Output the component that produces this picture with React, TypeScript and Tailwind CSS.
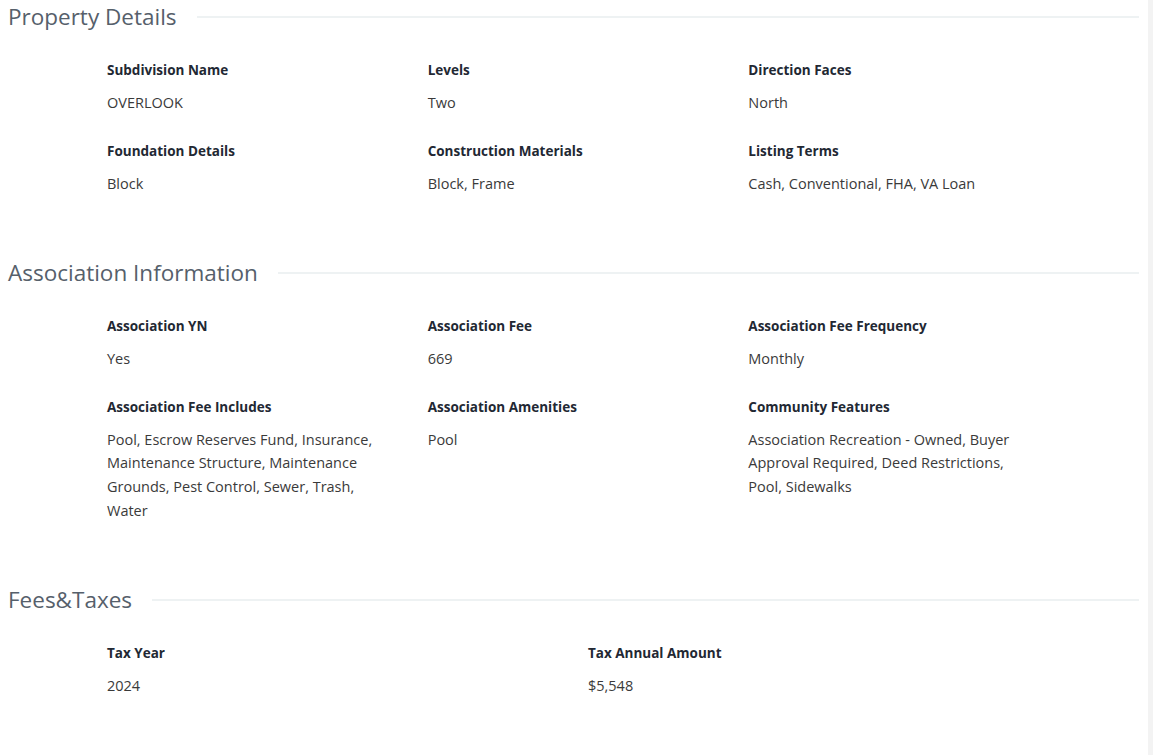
import React from "react";

type Item = { label: string; value: string };

const sections: { title: string; cols: number; items: Item[] }[] = [
  {
    title: "Property Details",
    cols: 3,
    items: [
      { label: "Subdivision Name", value: "OVERLOOK" },
      { label: "Levels", value: "Two" },
      { label: "Direction Faces", value: "North" },
      { label: "Foundation Details", value: "Block" },
      { label: "Construction Materials", value: "Block, Frame" },
      { label: "Listing Terms", value: "Cash, Conventional, FHA, VA Loan" },
    ],
  },
  {
    title: "Association Information",
    cols: 3,
    items: [
      { label: "Association YN", value: "Yes" },
      { label: "Association Fee", value: "669" },
      { label: "Association Fee Frequency", value: "Monthly" },
      {
        label: "Association Fee Includes",
        value:
          "Pool, Escrow Reserves Fund, Insurance, Maintenance Structure, Maintenance Grounds, Pest Control, Sewer, Trash, Water",
      },
      { label: "Association Amenities", value: "Pool" },
      {
        label: "Community Features",
        value:
          "Association Recreation - Owned, Buyer Approval Required, Deed Restrictions, Pool, Sidewalks",
      },
    ],
  },
  {
    title: "Fees&Taxes",
    cols: 2,
    items: [
      { label: "Tax Year", value: "2024" },
      { label: "Tax Annual Amount", value: "$5,548" },
    ],
  },
];

const App = () => {
  return (
    <div className="flex min-h-[755px] w-full bg-white font-['Open_Sans',sans-serif]">
      <div className="w-[1139px] flex flex-col gap-[60.5px] pb-10">
        {sections.map((s) => (
          <section key={s.title}>
            {/* heading with rule */}
            <div className="flex h-[34px] items-center pl-2">
              <h2 className="text-[22.5px] leading-[34px] text-[#56606b] whitespace-nowrap">
                {s.title}
              </h2>
              <div className="ml-5 h-[2px] flex-1 bg-[#eef2f3]" />
            </div>
            <div
              className={
                "ml-[107px] mt-[26px] w-[962px] grid gap-y-[26px] " +
                (s.cols === 3 ? "grid-cols-3" : "grid-cols-2")
              }
            >
              {s.items.map((it) => (
                <div key={it.label} className="pr-10">
                  <div className="text-[13.5px] leading-[20px] font-bold text-[#222833]">
                    {it.label}
                  </div>
                  <div className="mt-[11px] text-[14.5px] leading-[23.7px] text-[#3a3a3a]">
                    {it.value}
                  </div>
                </div>
              ))}
            </div>
          </section>
        ))}
      </div>
      <div className="ml-auto w-[5px] bg-[#f3f3f3]" />
    </div>
  );
};

export default App;
